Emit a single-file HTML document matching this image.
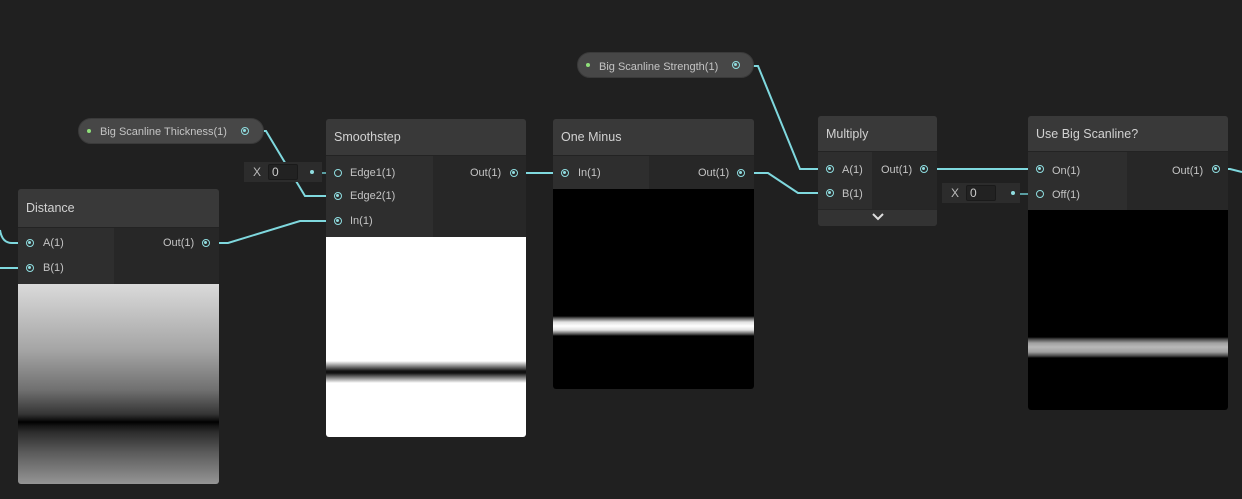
<!DOCTYPE html><html><head><style>
*{margin:0;padding:0;box-sizing:border-box}
body{width:1242px;height:499px;background:#202020;position:relative;overflow:hidden;font-family:"Liberation Sans",sans-serif;font-size:11px;color:#c4c4c4}
.n{position:absolute;background:#2e2e2e;border-radius:3px;overflow:hidden}
.h{position:absolute;left:0;right:0;top:0;background:#393939;font-size:12.5px;padding-left:8px;color:#d2d2d2;border-bottom:1px solid #232323}
.o{position:absolute;background:#272727;right:0}
.t{position:absolute;white-space:nowrap}
.p{position:absolute;width:8px;height:8px;border:1.5px solid #8fdde0;border-radius:50%}
.p::after{content:"";position:absolute;left:1px;top:1px;width:3px;height:3px;border-radius:50%;background:#8fdde0}
.pe{position:absolute;width:8px;height:8px;border:1.5px solid #8fdde0;border-radius:50%}
.pill{position:absolute;background:#474747;border-radius:13px;height:26px;border:1px solid #3a3a3a}
.fld{position:absolute;background:#2c2c2c;height:20px}
.fld i{position:absolute;left:24px;top:2px;width:30px;height:16px;background:#222;border:1px solid #1a1a1a;border-radius:2px;font-style:normal;padding-left:3px;line-height:14px;font-size:12px;color:#ccc}
.fld b{position:absolute;left:9px;top:3px;font-weight:normal;font-size:12px;color:#bbb}
.dot{position:absolute;width:4px;height:4px;border-radius:50%;background:#8fdde0}
</style></head><body>
<svg width="1242" height="499" style="position:absolute;left:0;top:0" fill="none" stroke="#7fd8de" stroke-width="2">
<path d="M0 230 Q2 243 12 243 L30 243"/>
<path d="M0 268 Q4 268 12 268 L30 268"/>
<path d="M207 243 L228 243 L300 221 L338 221"/>
<path d="M256 131 L266 131 L305 196 L338 196"/>
<path d="M312 173 L338 173" stroke="#5a9ea2"/>
<path d="M514 173 L566 173"/>
<path d="M742 173 L768 173 L798 193 L830 193"/>
<path d="M748 66 L758 66 L800 169 L830 169"/>
<path d="M925 169 L1040 169"/>
<path d="M1012 194 L1040 194" stroke="#5a9ea2"/>
<path d="M1216 169 L1230 169 L1242 172"/>
</svg>

<!-- Distance -->
<div class="n" style="left:18px;top:189px;width:201px;height:295px">
<div class="h" style="height:39px;line-height:38px">Distance</div>
<div class="o" style="left:96px;top:39px;height:56px"></div>
<div class="p" style="left:8px;top:50px"></div><div class="t" style="left:25px;top:48px">A(1)</div>
<div class="p" style="left:8px;top:75px"></div><div class="t" style="left:25px;top:73px">B(1)</div>
<div class="t" style="left:145px;top:48px">Out(1)</div><div class="p" style="left:184px;top:50px"></div>
<div style="position:absolute;left:0;right:0;top:95px;height:200px;background:linear-gradient(#dadada 0,#a5a5a5 33%,#707070 53%,#353535 65%,#101010 68%,#000 69%,#151515 71%,#2c2c2c 74%,#5a5a5a 84%,#959595 100%)"></div>
</div>

<!-- Smoothstep -->
<div class="n" style="left:326px;top:119px;width:200px;height:318px">
<div class="h" style="height:37px;line-height:36px">Smoothstep</div>
<div class="o" style="left:107px;top:37px;height:81px"></div>
<div class="pe" style="left:8px;top:50px"></div><div class="t" style="left:24px;top:48px">Edge1(1)</div>
<div class="p" style="left:8px;top:73px"></div><div class="t" style="left:24px;top:71px">Edge2(1)</div>
<div class="p" style="left:8px;top:98px"></div><div class="t" style="left:24px;top:96px">In(1)</div>
<div class="t" style="left:144px;top:48px">Out(1)</div><div class="p" style="left:184px;top:50px"></div>
<div style="position:absolute;left:0;right:0;top:118px;height:200px;background:linear-gradient(#fff 0,#fff 124px,#888 129px,#111 134px,#111 136px,#888 141px,#fff 146px,#fff)"></div>
</div>
<div class="fld" style="left:244px;top:162px;width:78px"><b>X</b><i>0</i><div class="dot" style="left:66px;top:8px"></div></div>

<!-- One Minus -->
<div class="n" style="left:553px;top:119px;width:201px;height:270px">
<div class="h" style="height:37px;line-height:36px">One Minus</div>
<div class="o" style="left:96px;top:37px;height:33px"></div>
<div class="p" style="left:8px;top:50px"></div><div class="t" style="left:25px;top:48px">In(1)</div>
<div class="t" style="left:145px;top:48px">Out(1)</div><div class="p" style="left:184px;top:50px"></div>
<div style="position:absolute;left:0;right:0;top:70px;height:200px;background:linear-gradient(#000 0,#000 127px,#555 129px,#e0e0e0 133px,#fff 137px,#e0e0e0 141px,#555 145px,#000 147px,#000)"></div>
</div>

<!-- Multiply -->
<div class="n" style="left:818px;top:116px;width:119px;height:110px">
<div class="h" style="height:36px;line-height:36px">Multiply</div>
<div class="o" style="left:54px;top:36px;height:57px"></div>
<div class="p" style="left:8px;top:49px"></div><div class="t" style="left:24px;top:48px">A(1)</div>
<div class="p" style="left:8px;top:73px"></div><div class="t" style="left:24px;top:72px">B(1)</div>
<div class="t" style="left:63px;top:48px">Out(1)</div><div class="p" style="left:102px;top:49px"></div>
<div style="position:absolute;left:0;right:0;top:93px;height:17px;background:#333;border-top:1px solid #262626"></div>
<svg style="position:absolute;left:54px;top:97px" width="12" height="8"><path d="M1 1 L6 6 L11 1" stroke="#ddd" stroke-width="2" fill="none"/></svg>
</div>
<div class="fld" style="left:942px;top:183px;width:78px"><b>X</b><i>0</i><div class="dot" style="left:69px;top:8px"></div></div>

<!-- Use Big Scanline -->
<div class="n" style="left:1028px;top:116px;width:200px;height:294px">
<div class="h" style="height:36px;line-height:36px">Use Big Scanline?</div>
<div class="o" style="left:99px;top:36px;height:58px"></div>
<div class="p" style="left:8px;top:49px"></div><div class="t" style="left:24px;top:49px">On(1)</div>
<div class="pe" style="left:8px;top:74px"></div><div class="t" style="left:24px;top:73px">Off(1)</div>
<div class="t" style="left:144px;top:49px">Out(1)</div><div class="p" style="left:184px;top:49px"></div>
<div style="position:absolute;left:0;right:0;top:94px;height:200px;background:linear-gradient(#000 0,#000 127px,#444 129px,#a0a0a0 133px,#b8b8b8 137px,#a0a0a0 142px,#444 146px,#000 148px,#000)"></div>
</div>

<!-- Pills -->
<div class="pill" style="left:78px;top:118px;width:186px">
<div style="position:absolute;left:8px;top:10px;width:4px;height:4px;border-radius:50%;background:#8fe07a"></div>
<div class="t" style="left:21px;top:7px">Big Scanline Thickness(1)</div>
<div class="p" style="left:162px;top:8px"></div></div>
<div class="pill" style="left:577px;top:52px;width:177px">
<div style="position:absolute;left:8px;top:10px;width:4px;height:4px;border-radius:50%;background:#8fe07a"></div>
<div class="t" style="left:21px;top:8px">Big Scanline Strength(1)</div>
<div class="p" style="left:154px;top:8px"></div></div>
</body></html>
